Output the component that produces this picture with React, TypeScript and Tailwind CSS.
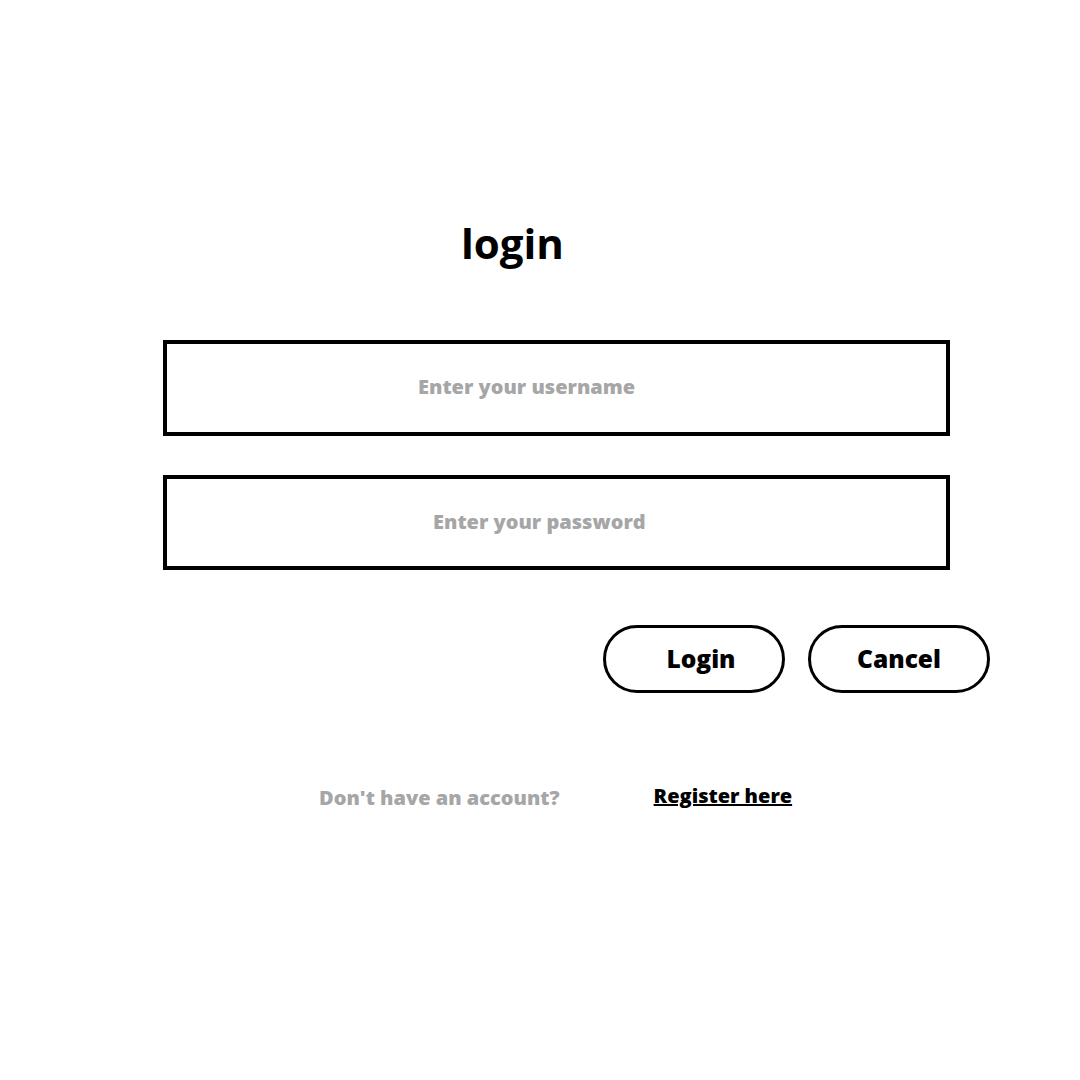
import { useState } from 'react'

export default function App() {
  const [username, setUsername] = useState('')
  const [password, setPassword] = useState('')

  return (
    <div className="min-h-[1080px] w-[1080px] bg-white font-['Open_Sans',sans-serif] font-bold text-black">
      <div className="pt-[218px] pl-[461px]">
        <h1 className="text-[42px] leading-[50px] font-bold">login</h1>
      </div>

      <div className="mt-[72px] ml-[163px] flex w-[787px] flex-col gap-[39px]">
        <input
          value={username}
          onChange={(e) => setUsername(e.target.value)}
          placeholder="Enter your username"
          className="h-[96px] w-full border-4 border-black pb-[4px] pl-[251px] text-[20px] font-extrabold outline-none placeholder:text-[#a6a6a6]"
        />
        <input
          type="password"
          value={password}
          onChange={(e) => setPassword(e.target.value)}
          placeholder="Enter your password"
          className="h-[95px] w-full border-4 border-black pb-[2px] pl-[266px] text-[20px] font-extrabold outline-none placeholder:text-[#a6a6a6]"
        />
      </div>

      <div className="mt-[55px] ml-[603px] flex gap-[23px]">
        <button className="h-[68px] w-[182px] rounded-full border-[3px] border-black pl-[14px] text-[24.5px] font-extrabold">
          Login
        </button>
        <button className="h-[68px] w-[182px] rounded-full border-[3px] border-black text-[24.5px] font-extrabold">
          Cancel
        </button>
      </div>

      <div className="mt-[90px] flex items-center">
        <span className="ml-[319px] text-[20px] font-extrabold text-[#a6a6a6]">Don't have an account?</span>
        <a href="#" className="ml-[94px] -mt-[4px] text-[20px] font-extrabold text-black underline">
          Register here
        </a>
      </div>
    </div>
  )
}
